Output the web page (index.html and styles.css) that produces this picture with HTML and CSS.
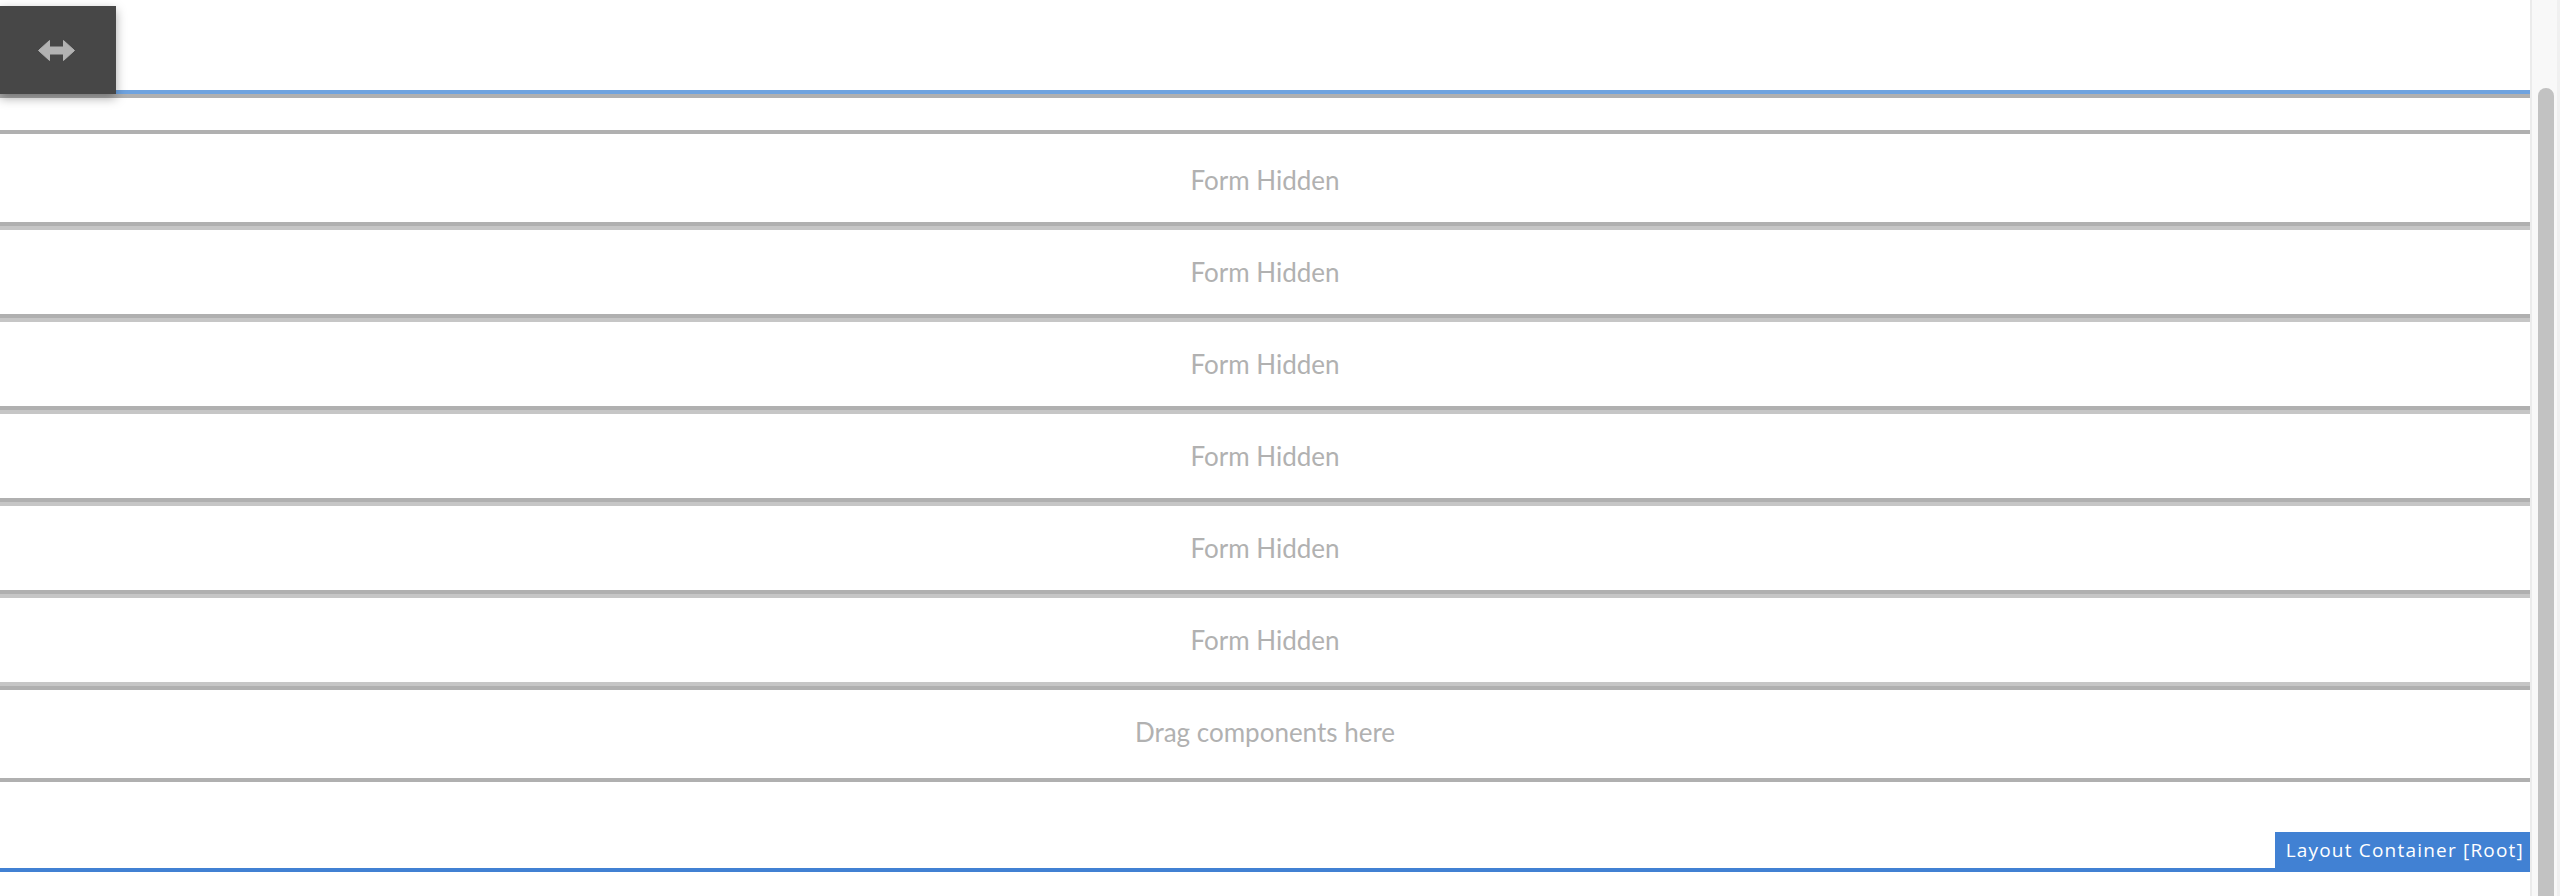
FILE: index.html
```html
<!DOCTYPE html>
<html lang="en">
<head>
<meta charset="utf-8">
<title>Layout Container</title>
<link rel="stylesheet" href="styles.css">
</head>
<body>
<div class="app">
  <main class="canvas">
    <div class="top-space"></div>
    <button class="toggle" type="button" aria-label="Toggle side panel">
      <svg width="37" height="21" viewBox="0 0 37 21" aria-hidden="true">
        <path d="M0.5 10.5 L11.5 0.5 L11.5 7 L25.5 7 L25.5 0.5 L36.5 10.5 L25.5 20.5 L25.5 14 L11.5 14 L11.5 20.5 Z" fill="#b3b3b3" stroke="#b3b3b3" stroke-width="1" stroke-linejoin="round"/>
      </svg>
    </button>
    <section class="root">
      <div class="root-rule"></div>
      <div class="root-gap"></div>
      <div class="cmp cmp-first">Form Hidden</div>
      <div class="cmp">Form Hidden</div>
      <div class="cmp">Form Hidden</div>
      <div class="cmp">Form Hidden</div>
      <div class="cmp">Form Hidden</div>
      <div class="cmp cmp-last">Form Hidden</div>
      <div class="drop">Drag components here</div>
      <div class="root-tail"></div>
      <span class="root-label">Layout Container [Root]</span>
    </section>
  </main>
  <aside class="scrollbar"><div class="thumb"></div></aside>
</div>
</body>
</html>
```

FILE: styles.css
```css
html, body {
  margin: 0;
  padding: 0;
  background: #ffffff;
  overflow: hidden;
}

.app {
  display: flex;
  width: 2560px;
  height: 896px;
}

.canvas {
  position: relative;
  width: 2530px;
  flex: none;
  font-family: Lato, "Open Sans", sans-serif;
}

.top-space {
  height: 90px;
}

.toggle {
  position: absolute;
  top: 6px;
  left: 0;
  width: 116px;
  height: 88px;
  margin: 0;
  padding: 0;
  border: 0;
  background: #474747;
  box-shadow: 0 4px 10px rgba(0, 0, 0, 0.35);
  display: flex;
  align-items: center;
  justify-content: center;
  z-index: 2;
}

.toggle svg {
  display: block;
  margin-left: -4px;
  margin-top: 1px;
}

.root {
  position: relative;
  border-top: 4px solid #6fa3df;
  border-bottom: 4px solid #4181d3;
}

.root-rule {
  height: 4px;
  background: #b0b0b0;
}

.root-gap {
  height: 32px;
}

.cmp {
  height: 84px;
  border-top: 4px solid #c6c6c6;
  border-bottom: 4px solid #b0b0b0;
  display: flex;
  align-items: center;
  justify-content: center;
  color: #b1b1b1;
  font-size: 26px;
}

.cmp-first {
  border-top-color: #b0b0b0;
  padding-top: 4px;
}

.cmp-last {
  border-bottom-color: #c6c6c6;
}

.drop {
  height: 83px;
  padding-bottom: 5px;
  border-top: 4px solid #b0b0b0;
  border-bottom: 4px solid #b0b0b0;
  display: flex;
  align-items: center;
  justify-content: center;
  color: #b1b1b1;
  font-size: 26px;
}

.root-tail {
  height: 86px;
}

.root-label {
  position: absolute;
  right: 0;
  bottom: -4px;
  height: 40px;
  box-sizing: border-box;
  padding: 0 6px 4px 11px;
  background: #4181d3;
  color: #ffffff;
  font-family: "Open Sans", sans-serif;
  font-size: 19px;
  letter-spacing: 1.2px;
  line-height: 36px;
  white-space: nowrap;
}

.scrollbar {
  width: 30px;
  flex: none;
  box-sizing: border-box;
  border-left: 2px solid #ebebeb;
  border-right: 3px solid #f0f0f0;
  background: #f8f8f8;
  padding-top: 88px;
  padding-left: 6px;
}

.thumb {
  width: 16px;
  height: 840px;
  background: #c2c2c2;
  border-radius: 8px;
}
```
